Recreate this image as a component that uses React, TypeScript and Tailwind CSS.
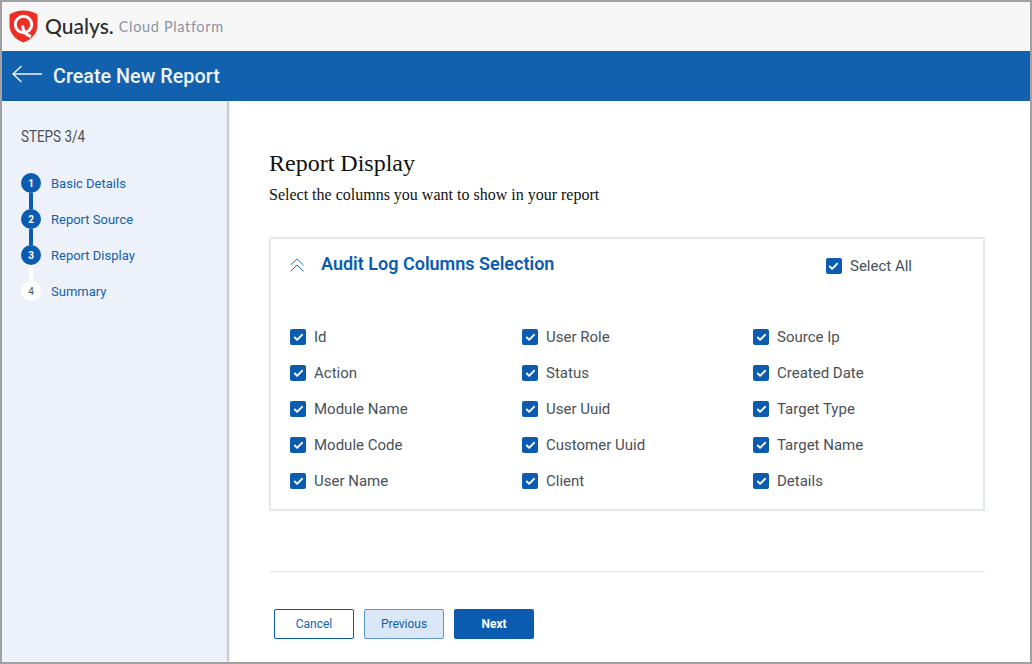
import { Check } from 'lucide-react'

const steps = [
  { n: 1, label: 'Basic Details', done: true },
  { n: 2, label: 'Report Source', done: true },
  { n: 3, label: 'Report Display', done: true },
  { n: 4, label: 'Summary', done: false },
]

const columns = [
  ['Id', 'Action', 'Module Name', 'Module Code', 'User Name'],
  ['User Role', 'Status', 'User Uuid', 'Customer Uuid', 'Client'],
  ['Source Ip', 'Created Date', 'Target Type', 'Target Name', 'Details'],
]

function Logo() {
  return (
    <svg width="29" height="33" viewBox="0 0 29 33" className="shrink-0">
      <path d="M14.5 0.5 C19.5 0.5 24.5 2 28.5 4.5 L28.5 15 C28.5 23.5 22.5 29.5 14.5 32.5 C6.5 29.5 0.5 23.5 0.5 15 L0.5 4.5 C4.5 2 9.5 0.5 14.5 0.5 Z" fill="#ed2e26" />
      <circle cx="14.5" cy="14.5" r="8.2" fill="none" stroke="#fff" strokeWidth="3" />
      <path d="M13.5 15.5 C14 21 17 25 22 26.5" stroke="#fff" strokeWidth="3" fill="none" />
    </svg>
  )
}

function Box({ label }: { label: string }) {
  return (
    <label className="flex items-center gap-[8px] h-[36px] text-[15px] text-[#495057]">
      <span className="flex h-4 w-4 items-center justify-center rounded-[2px] bg-[#0b5cb0]">
        <Check size={11} strokeWidth={4} className="text-white" />
      </span>
      <span className="pt-[1px]">{label}</span>
    </label>
  )
}

export default function App() {
  return (
    <div className="w-[1032px] h-[664px] border-2 border-[#a1a1a1] bg-white flex flex-col overflow-hidden font-['Roboto',sans-serif]">
      {/* Top bar */}
      <div className="h-[49px] shrink-0 bg-[#f7f7f7] flex items-center pl-[7px]">
        <Logo />
        <span className="ml-[7px] mb-[1px] font-['Lato',sans-serif] text-[21px] font-medium text-[#2b2b2b]">Qualys.</span>
        <span className="ml-[5px] mt-[1px] font-['Lato',sans-serif] text-[14.5px] tracking-[0.65px] text-[#8b93a1]">Cloud Platform</span>
      </div>

      {/* Title bar */}
      <div className="h-[50px] shrink-0 bg-[#1261af] flex items-center pl-[10px]">
        <svg width="30" height="18" viewBox="0 0 30 18" className="mb-[5px] shrink-0">
          <path d="M30 9 H1 M9.5 1 L1 9 L9.5 17" fill="none" stroke="#f1f5fa" strokeWidth="1.4" />
        </svg>
        <h1 className="ml-[11px] pt-[2px] text-[19.8px] font-medium text-[#eef4fa]">Create New Report</h1>
      </div>

      <div className="flex-1 flex min-h-0">
        {/* Steps */}
        <div className="w-[225px] shrink-0 bg-[#edf2fa] shadow-[2px_0_2px_rgba(0,0,0,0.25)] pl-[19px] pt-[26px]">
          <div className="text-[17px] leading-[18px] text-[#495057] scale-x-[0.79] origin-left">STEPS 3/4</div>
          <div className="mt-[28px]">
            {steps.map((s, i) => (
              <div key={s.n}>
                <div className="flex items-center h-[20px]">
                  <span
                    className={
                      s.done
                        ? 'flex h-5 w-5 items-center justify-center rounded-full bg-[#0b5cb0] text-[10px] font-bold text-white'
                        : 'flex h-5 w-5 items-center justify-center rounded-full bg-white text-[10px] text-[#495057]'
                    }
                  >
                    {s.n}
                  </span>
                  <span className="ml-[10px] pt-[2px] text-[13px] text-[#1261af]">{s.label}</span>
                </div>
                {i < 3 && (
                  <div className={s.done && i < 2 ? 'ml-[8px] h-[16px] w-[4px] bg-[#0b5cb0]' : 'ml-[8px] h-[16px] w-[4px] bg-white'} />
                )}
              </div>
            ))}
          </div>
        </div>

        {/* Main */}
        <div className="flex-1 pl-[42px] pr-[45px] pt-[48px]">
          <h2 className="font-['Liberation_Serif',serif] text-[24px] leading-[28px] text-[#111]">Report Display</h2>
          <p className="mt-[8px] font-['Liberation_Serif',serif] text-[16px] leading-[20px] text-[#111]">Select the columns you want to show in your report</p>

          <div className="mt-[32px] h-[274px] border-2 border-[#e3e8ec] px-[19px]">
            <div className="flex items-start h-[80px] pt-[10px]">
              <svg width="14" height="14" viewBox="0 0 14 14" className="mt-[9px] shrink-0">
                <path d="M0.5 7 L7 1 L13.5 7 M0.5 13.5 L7 7 L13.5 13.5" fill="none" stroke="#2a70b8" strokeWidth="1" />
              </svg>
              <h3 className="ml-[17px] text-[18px] font-semibold leading-[30px] text-[#0b5cb0]">Audit Log Columns Selection</h3>
              <div className="ml-auto mr-[52px] mt-[-1px]">
                <Box label="Select All" />
              </div>
            </div>
            <div className="flex">
              {columns.map((col, i) => (
                <div key={i} className={i === 0 ? 'w-[232px]' : i === 1 ? 'w-[231px]' : 'flex-1'}>
                  {col.map(c => (
                    <Box key={c} label={c} />
                  ))}
                </div>
              ))}
            </div>
          </div>

          <div className="mt-[60px] border-t border-[#e3e3e3] pt-[37px] pl-[5px] flex gap-[10px]">
            <button className="h-[30px] w-[80px] rounded-[2px] border border-[#0b5cb0] bg-white text-[12px] text-[#1261af]">Cancel</button>
            <button className="h-[30px] w-[80px] rounded-[2px] border border-[#5b93cf] bg-[#dae7f6] text-[12px] text-[#1261af]">Previous</button>
            <button className="h-[30px] w-[80px] rounded-[2px] bg-[#0b5cb0] text-[12px] font-bold text-white">Next</button>
          </div>
        </div>
      </div>
    </div>
  )
}
